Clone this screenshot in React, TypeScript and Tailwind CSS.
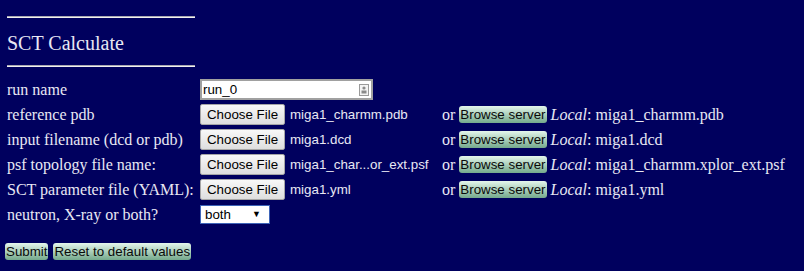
import React from "react";

const sans = "font-['Liberation_Sans',Arial,sans-serif] text-[13.33px]";

type FileRow = {
  label: string;
  chosen: string;
  local: string;
};

const fileRows: FileRow[] = [
  { label: "reference pdb", chosen: "miga1_charmm.pdb", local: "miga1_charmm.pdb" },
  { label: "input filename (dcd or pdb)", chosen: "miga1.dcd", local: "miga1.dcd" },
  {
    label: "psf topology file name:",
    chosen: "miga1_char...or_ext.psf",
    local: "miga1_charmm.xplor_ext.psf",
  },
  { label: "SCT parameter file (YAML):", chosen: "miga1.yml", local: "miga1.yml" },
];

function Rule() {
  return <div className="ml-[2px] h-[2px] w-[188px] border-t border-[#a8a8b0] bg-[#f0f0f0]" />;
}

function GreenButton({ children }: { children: React.ReactNode }) {
  return (
    <span
      className={`${sans} inline-flex h-[17px] items-center rounded-[3px] bg-gradient-to-b from-[#e4f6ec] to-[#74a98c] px-[1px] leading-none text-[#0a0a0a]`}
    >
      {children}
    </span>
  );
}

export default function App() {
  return (
    <div className="min-h-screen bg-[#00005e] pl-[5px] pt-[16px] font-['Liberation_Serif',serif] text-[16px] text-[#e8e8f4]">
      <Rule />
      <h1 className="ml-[2px] mt-[14px] text-[20px] leading-[23px]">SCT Calculate</h1>
      <div className="mt-[10px]">
        <Rule />
      </div>

      <div className="ml-[2px] mt-[12px] grid grid-cols-[193px_242px_auto] gap-y-[4px]">
        <div className="flex h-[21px] items-center">run name</div>
        <div className="col-span-2 flex h-[21px] items-center">
          <div className="flex h-[21px] w-[173px] items-center justify-between border-2 border-[#a0a0a0] bg-white pl-[1px] pr-[2px]">
            <span className={`${sans} text-black`}>run_0</span>
            <span className="flex h-[12px] w-[10px] items-end justify-center border border-[#9a9a9a] bg-[#f4f4f4] pb-[1px]">
              <svg width="6" height="8" viewBox="0 0 6 8">
                <circle cx="3" cy="2" r="1.6" fill="#8a8a8a" />
                <rect x="0.5" y="4.5" width="5" height="3" fill="#8a8a8a" />
              </svg>
            </span>
          </div>
        </div>

        {fileRows.map((row) => (
          <React.Fragment key={row.label}>
            <div className="flex h-[21px] items-center whitespace-nowrap">{row.label}</div>
            <div className="flex h-[21px] items-center gap-[5px] whitespace-nowrap">
              <span
                className={`${sans} flex h-[21px] w-[85px] items-center justify-center rounded-[2px] border border-[#a6a6a6] bg-gradient-to-b from-[#f8f8f8] to-[#dedede] text-black`}
              >
                Choose File
              </span>
              <span className={sans}>{row.chosen}</span>
            </div>
            <div className="flex h-[21px] items-center whitespace-pre">
              <span>or </span>
              <GreenButton>Browse server</GreenButton>
              <span> </span>
              <i>Local</i>
              <span>: {row.local}</span>
            </div>
          </React.Fragment>
        ))}

        <div className="flex h-[21px] items-center">neutron, X-ray or both?</div>
        <div className="col-span-2 flex h-[21px] items-center">
          <div
            className={`${sans} flex h-[19px] w-[70px] items-center justify-between border border-[#3e64b8] bg-white pl-[4px] pr-[8px] text-black`}
          >
            <span>both</span>
            <span className="text-[9px]">▼</span>
          </div>
        </div>
      </div>

      <div className="mt-[18px] flex gap-[5px]">
        <GreenButton>Submit</GreenButton>
        <GreenButton>Reset to default values</GreenButton>
      </div>
    </div>
  );
}
